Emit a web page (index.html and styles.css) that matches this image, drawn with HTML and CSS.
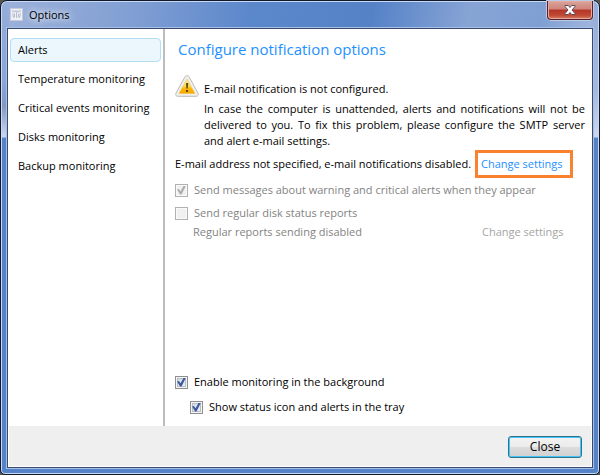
FILE: index.html
```html
<!DOCTYPE html>
<html lang="en">
<head>
  <meta charset="UTF-8" />
  <meta name="viewport" content="width=device-width, initial-scale=1.0"/>
  <title>Options</title>
  <link rel="stylesheet" href="styles.css">
</head>
<body>
  <div class="window">
    <header class="titlebar">
      <svg class="app-icon" width="13" height="13" viewBox="0 0 13 13">
        <rect x="0.5" y="0.5" width="12" height="12" fill="#eef0f5" stroke="#c3cbdc"/>
        <path d="M2 3h2v1h1v-1h3v1h1v-1h2M3 5v3l1 2M6.500 4v6M10 5v3l-1 2M4.500 6v3M8.500 6v3" fill="none" stroke="#b4bccb"/>
      </svg>
      <h1>Options</h1>
      <button class="close-x" type="button" aria-label="Close window">
        <svg width="12" height="10" viewBox="0 0 12 10">
          <path d="M1 .5h3.300L6 2.500 7.700.5H11v1L8 5l3 3.500v1H7.700L6 7.500l-1.700 2H1v-1L4 5 1 1.500z" fill="#fff" stroke="#5b4a58"/>
        </svg>
      </button>
    </header>

    <div class="client">
      <div class="main">
        <!-- Sections -->
        <nav class="sidebar">
          <a href="#" class="active">Alerts</a>
          <a href="#">Temperature monitoring</a>
          <a href="#">Critical events monitoring</a>
          <a href="#">Disks monitoring</a>
          <a href="#">Backup monitoring</a>
        </nav>

        <!-- Alerts page -->
        <main class="content">
          <h2>Configure notification options</h2>

          <div class="warning">
            <svg width="24" height="22" viewBox="0 0 24 22">
              <defs>
                <linearGradient id="warnFill" x1="0" y1="0" x2="0" y2="1">
                  <stop offset="0" stop-color="#fff3a8"/>
                  <stop offset="0.55" stop-color="#fdd544"/>
                  <stop offset="0.6" stop-color="#fbb90c"/>
                  <stop offset="1" stop-color="#f7a500"/>
                </linearGradient>
              </defs>
              <path d="M12 .7c1 0 1.800.5 2.300 1.500l8.700 16c.9 1.700 0 3.100-1.800 3.100H2.800C1 21.300.1 19.900 1 18.200l8.700-16C10.200 1.200 11 .7 12 .7z" fill="#f0efec" stroke="#bdbbb7"/>
              <path d="M12 4l8 14.500H4z" fill="url(#warnFill)" stroke="#f3c13c" stroke-width="0.5" stroke-linejoin="round"/>
              <path d="M11 8h2.200l-.4 5.500h-1.400z" fill="#5d4a16"/>
              <rect x="11" y="15" width="2" height="2" fill="#5d4a16"/>
            </svg>
            <div class="warning-text">
              <p>E-mail notification is not configured.</p>
              <p class="details">In case the computer is unattended, alerts and notifications will not be delivered to you. To fix this problem, please configure the SMTP server and alert e-mail settings.</p>
            </div>
          </div>

          <div class="row address">
            <span>E-mail address not specified, e-mail notifications disabled.</span>
            <a href="#" class="change highlighted">Change settings</a>
          </div>

          <label class="check disabled"><input type="checkbox" checked disabled> Send messages about warning and critical alerts when they appear</label>
          <label class="check disabled"><input type="checkbox" disabled> Send regular disk status reports</label>
          <div class="row reports">
            <span>Regular reports sending disabled</span>
            <a class="change">Change settings</a>
          </div>

          <div class="background">
            <label class="check"><input type="checkbox" checked> Enable monitoring in the background</label>
            <label class="check nested"><input type="checkbox" checked> Show status icon and alerts in the tray</label>
          </div>
        </main>
      </div>

      <footer class="footer">
        <button class="close-button" type="button">Close</button>
      </footer>
    </div>
  </div>
</body>
</html>
```

FILE: styles.css
```css
* {
  box-sizing: border-box;
}
body {
  margin: 0;
  background-color: #55554f;
  font-family: 'Open Sans', 'Noto Sans', sans-serif;
  font-size: 11px;
  line-height: 16px;
  color: #000;
}
h1, h2, p {
  margin: 0;
  font-weight: normal;
}
a {
  color: inherit;
  text-decoration: none;
}

/* Window frame */
.window {
  min-height: 100vh;
  display: flex;
  flex-direction: column;
  padding: 0 6px 6px;
  border: 1px solid #10182c;
  border-radius: 7px 7px 5px 5px;
  box-shadow: inset 0 0 0 1px #c9daf2;
  background:
    linear-gradient(#95add9 0, #8ba5d5 80px, #8299c5 105px, #cbd7ee 136px, transparent 137px) left / 8px 100% no-repeat,
    linear-gradient(#95add9 0, #a4b9df 90px, #cbd7ee 136px, transparent 137px) right / 8px 100% no-repeat,
    linear-gradient(100deg, #9db2da 0, #819fd3 22%, #5b87cb 42%, #5582c7 62%, #87a4d5 78%, #7f9fd3 90%, #a4b9df 100%) top / 100% 29px no-repeat,
    #5583ca;
}
.titlebar {
  height: 27px;
  display: flex;
  align-items: center;
  gap: 6px;
  padding-left: 3px;
}
.titlebar h1 {
  flex: 1;
  font-size: 11px;
  text-shadow: 0 0 6px #fff, 0 0 10px #dfe8f7;
}
.close-x {
  align-self: flex-start;
  width: 46px;
  height: 19px;
  display: flex;
  align-items: center;
  justify-content: center;
  padding: 0;
  border: 1px solid #5a1e26;
  border-top: none;
  border-radius: 0 0 4px 4px;
  box-shadow: inset 0 0 0 1px #e3aaa2, 0 0 0 1px #b9c9e6;
  background: linear-gradient(#d9a59c 0, #cf8379 45%, #b53427 50%, #c04a34 80%, #d98066 100%);
}
.client {
  flex: 1;
  display: flex;
  flex-direction: column;
  border: 1px solid #3a4a6e;
  outline: 1px solid #a9c0e6;
  background-color: #fff;
}
.main {
  flex: 1;
  display: flex;
}

/* Sidebar */
.sidebar {
  width: 157px;
  flex: none;
  display: flex;
  flex-direction: column;
  gap: 5px;
  padding: 9px 2px;
  border-right: 2px solid #bdbdbd;
}
.sidebar a {
  padding: 3px 7px;
  border: 1px solid transparent;
  border-radius: 4px;
}
.sidebar .active {
  border-color: #b3def3;
  background-color: #ebf7fc;
}

/* Page content */
.content {
  flex: 1;
  display: flex;
  flex-direction: column;
  padding: 9px 7px 11px 10px;
}
.content h2 {
  padding-left: 3px;
  font-size: 15px;
  line-height: 22px;
  color: #1e90ff;
}
.warning {
  display: flex;
  gap: 5px;
  margin-top: 15px;
}
.warning svg {
  flex: none;
}
.warning-text {
  flex: 1;
  padding-top: 6px;
}
.details {
  margin-top: 4px;
  text-align: justify;
}
.row {
  display: flex;
  align-items: center;
}
.row span {
  width: 300px;
}
.address {
  margin: 1px 0 -3px;
}
.change {
  padding: 3px;
  border: 3px solid transparent;
}
.highlighted {
  padding: 3px 7px 3px 3px;
  border-color: #fa812d;
  color: #1e90ff;
}
.check {
  display: flex;
  align-items: center;
  gap: 6px;
  margin-top: 7px;
}
.check input {
  appearance: none;
  width: 13px;
  height: 13px;
  margin: 0;
  border: 1px solid #8e8f8f;
  box-shadow: inset 0 0 0 1px #f4f4f4, inset 0 0 0 2px #b8bec8;
  background: linear-gradient(135deg, #cfd5dd, #f6f6f6);
}
.check input:checked::after {
  content: '';
  display: block;
  width: 9px;
  height: 9px;
  margin: 1px;
  background-color: #3c5a9c;
  clip-path: polygon(0 45%, 20% 40%, 40% 65%, 75% 0, 100% 0, 50% 100%, 35% 100%);
}
.disabled, .reports {
  color: #838383;
}
.check input:disabled {
  border-color: #b1b1b1;
  box-shadow: inset 0 0 0 1px #fafafa;
  background: #f0f0f0;
}
.check input:disabled::after {
  background-color: #adadad;
}
.reports {
  margin-top: -3px;
  padding-left: 18px;
}
.reports span {
  width: 283px;
}
.reports .change {
  color: #a5a5a5;
}
.background {
  margin-top: auto;
}
.background .nested {
  margin-top: 9px;
  padding-left: 15px;
}

/* Bottom bar */
.footer {
  display: flex;
  justify-content: flex-end;
  margin: 0 1px 1px;
  padding: 10px 9px 8px;
  background-color: #efefef;
}
.close-button {
  width: 74px;
  height: 22px;
  padding: 0;
  border: 1px solid #35708f;
  border-radius: 3px;
  box-shadow: inset 0 0 0 1px #3fc8f5;
  background: linear-gradient(#f3f3f3 0, #ebebeb 50%, #dcdcdc 51%, #d0d0d0 100%);
  font-family: inherit;
  font-size: 12px;
  line-height: 16px;
}
```
